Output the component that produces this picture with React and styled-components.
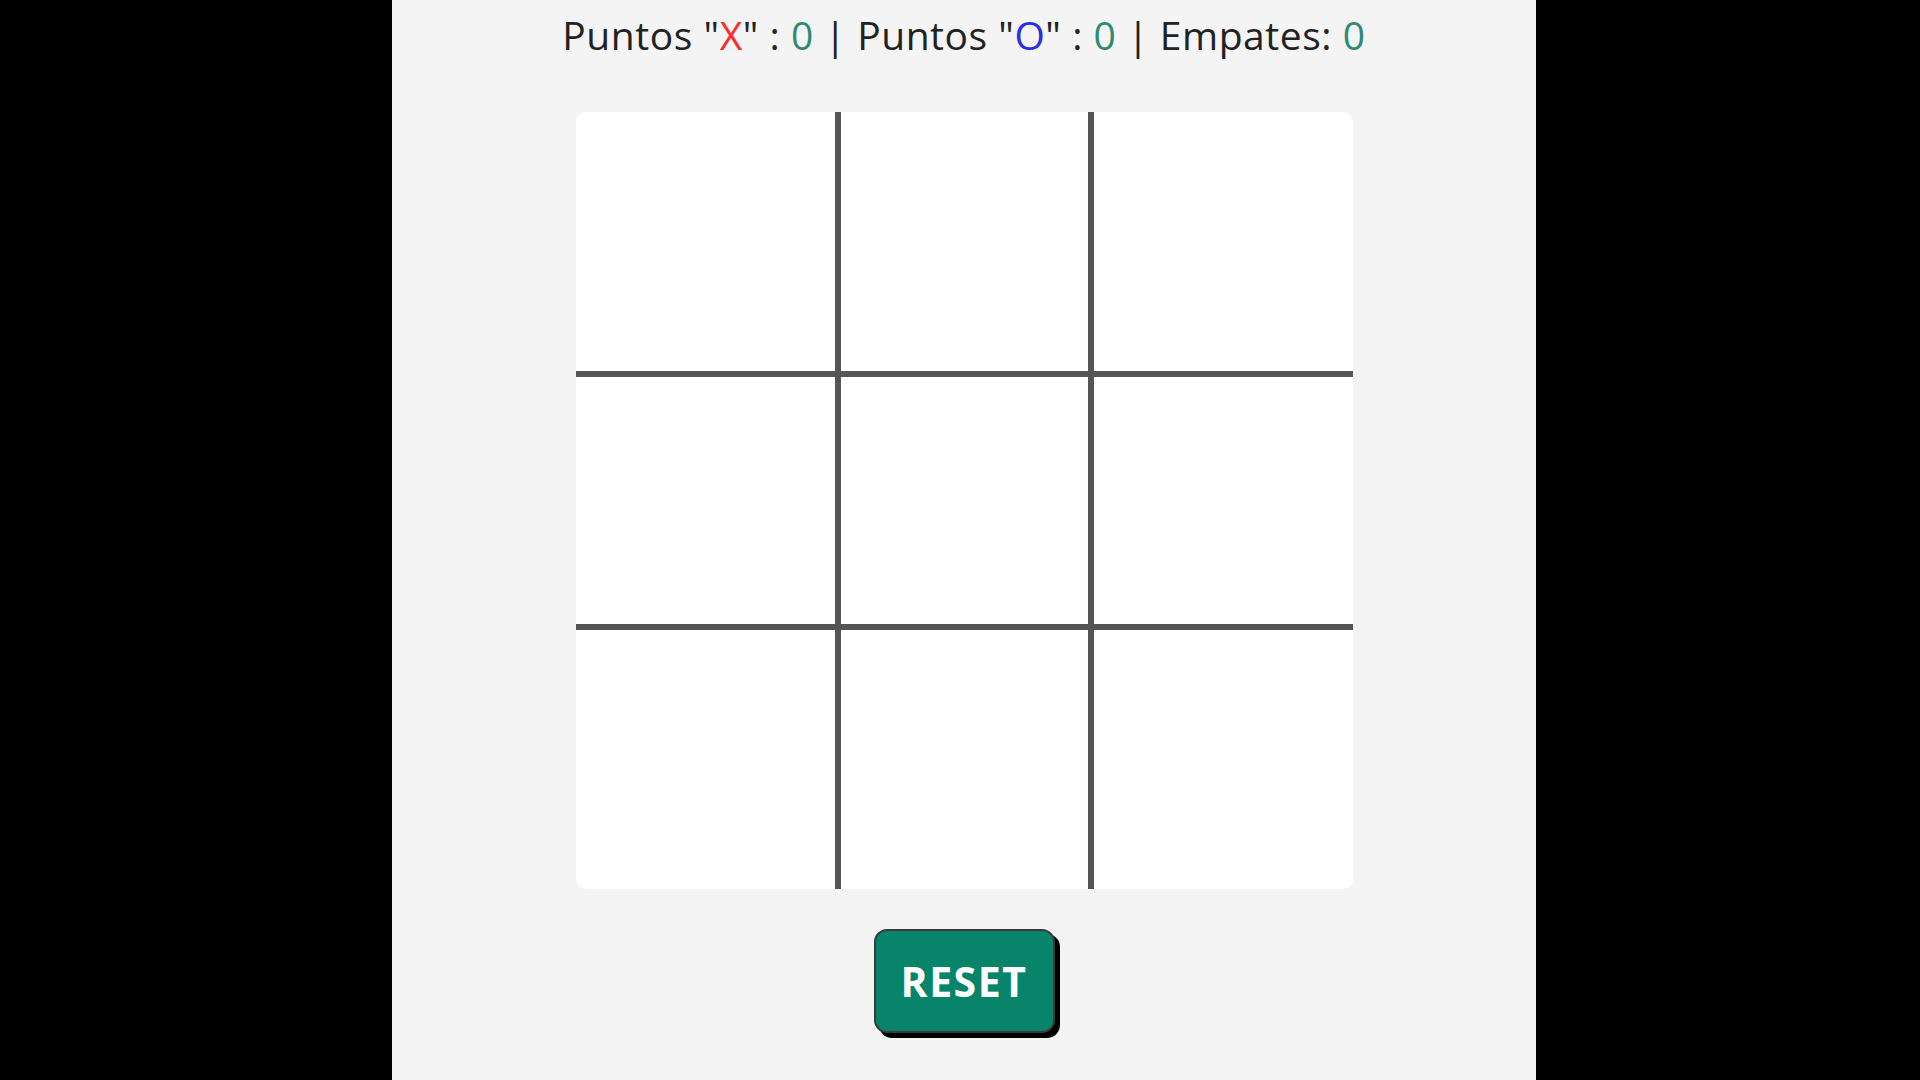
import React, { useState } from "react";
import styled, { createGlobalStyle } from "styled-components";

const GlobalStyle = createGlobalStyle`
  html, body {
    margin: 0;
    padding: 0;
    background: #000;
    overflow: hidden;
  }
  * {
    box-sizing: border-box;
  }
`;

const Page = styled.div`
  width: 1144px;
  height: 100vh;
  margin: 0 0 0 392px;
  background: #f4f4f4;
  display: flex;
  flex-direction: column;
  align-items: center;
  font-family: "Open Sans", "DejaVu Sans", sans-serif;
`;

const Score = styled.h2`
  margin: 11px 0 0;
  font-size: 39px;
  line-height: 48px;
  font-weight: 400;
  color: #222;
  letter-spacing: 0.55px;
`;

const Mark = styled.span`
  color: ${(p) => p.color};
`;

const Board = styled.div`
  margin-top: 53px;
  width: 777px;
  height: 777px;
  background: #fff;
  border-radius: 10px;
  display: grid;
  grid-template-columns: repeat(3, 259px);
  grid-template-rows: repeat(3, 259px);
`;

const Cell = styled.div`
  border-left: ${(p) => (p.$col === 1 ? "6px solid #555" : "none")};
  border-right: ${(p) => (p.$col === 1 ? "6px solid #555" : "none")};
  border-top: ${(p) => (p.$row === 1 ? "6px solid #555" : "none")};
  border-bottom: ${(p) => (p.$row === 1 ? "6px solid #555" : "none")};
  display: flex;
  align-items: center;
  justify-content: center;
  font-size: 160px;
  cursor: pointer;
`;

const ResetButton = styled.button`
  margin-top: 40px;
  width: 181px;
  height: 104px;
  background: #08846a;
  color: #fff;
  border: 2px solid #3a3a3a;
  border-radius: 13px;
  box-shadow: 5px 5px 0 #000;
  font-family: "Open Sans", "DejaVu Sans", sans-serif;
  font-size: 41px;
  font-weight: 700;
  letter-spacing: 1.5px;
  cursor: pointer;
  padding: 0;
`;

const GREEN = "#2e8b70";

export default function App() {
  const [cells, setCells] = useState(Array(9).fill(""));
  const [turn, setTurn] = useState("X");

  const play = (i) => {
    if (cells[i]) return;
    const next = [...cells];
    next[i] = turn;
    setCells(next);
    setTurn(turn === "X" ? "O" : "X");
  };

  return (
    <>
      <GlobalStyle />
      <Page>
        <Score>
          Puntos "<Mark color="#ff2a2a">X</Mark>" : <Mark color={GREEN}>0</Mark> | Puntos "
          <Mark color="#2b2bea">O</Mark>" : <Mark color={GREEN}>0</Mark> | Empates:{" "}
          <Mark color={GREEN}>0</Mark>
        </Score>
        <Board>
          {cells.map((c, i) => (
            <Cell key={i} $row={Math.floor(i / 3)} $col={i % 3} onClick={() => play(i)}>
              {c}
            </Cell>
          ))}
        </Board>
        <ResetButton onClick={() => setCells(Array(9).fill(""))}>RESET</ResetButton>
      </Page>
    </>
  );
}
